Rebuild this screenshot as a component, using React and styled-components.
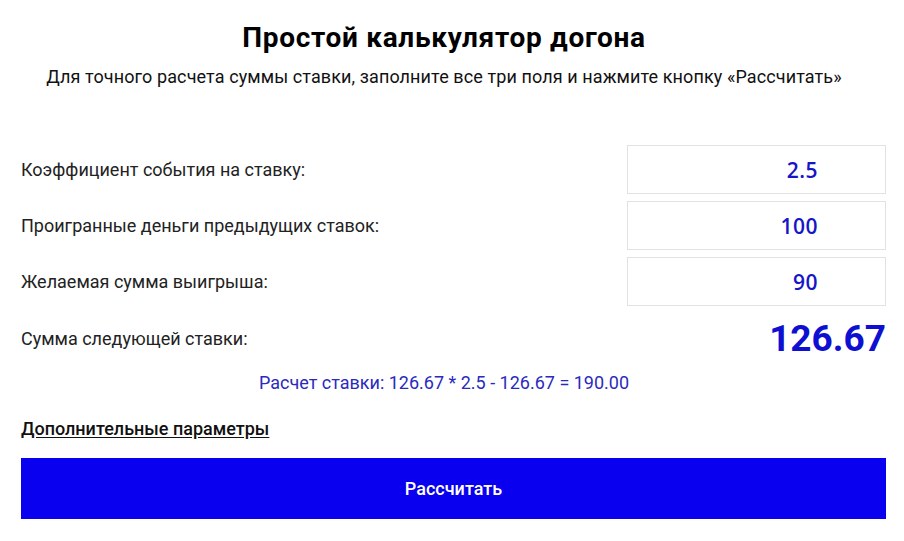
import styled, { createGlobalStyle } from "styled-components";

const Global = createGlobalStyle`
  body {
    margin: 0;
    background: #fff;
    font-family: Roboto, "Liberation Sans", sans-serif;
    color: #111;
  }
`;

const Page = styled.div`
  width: 865px;
  padding: 20px 18px 0 21px;
`;

const Header = styled.header`
  padding-right: 19px;
  text-align: center;
`;

const Title = styled.h1`
  margin: 0;
  font-size: 28px;
  font-weight: 700;
  line-height: 36px;
  letter-spacing: 0.7px;
  color: #000;
`;

const Subtitle = styled.p`
  margin: 8px 0 0;
  font-size: 18px;
  line-height: 26px;
  letter-spacing: 0.1px;
  color: #111;
`;

const Form = styled.div`
  margin-top: 55px;
  display: flex;
  flex-direction: column;
  gap: 7px;
`;

const Row = styled.div`
  display: flex;
  align-items: center;
  justify-content: space-between;
  height: ${(p) => (p.$tall ? "50px" : "49px")};
`;

const Label = styled.span`
  font-size: 18px;
  color: #222;
`;

const Field = styled.div`
  box-sizing: border-box;
  width: 259px;
  height: 49px;
  border: 1.5px solid #e2e2e2;
  display: flex;
  align-items: center;
  justify-content: flex-end;
  padding-right: 67px;
  font-family: "Open Sans", "DejaVu Sans", sans-serif;
  font-weight: 600;
  font-size: 21px;
  letter-spacing: 0.5px;
  color: #1616c8;
`;

const Result = styled.span`
  font-size: 37px;
  font-weight: 700;
  color: #0f0fd2;
`;

const Formula = styled.div`
  padding-right: 19px;
  text-align: center;
  font-size: 18px;
  line-height: 24px;
  color: #2a2abe;
  margin-top: 8px;
`;

const More = styled.a`
  display: block;
  width: max-content;
  margin-top: 22px;
  font-size: 18px;
  line-height: 24px;
  font-weight: 500;
  color: #111;
  text-decoration: underline;
  text-underline-offset: 2px;
`;

const Button = styled.button`
  display: block;
  width: 865px;
  height: 61px;
  margin-top: 17px;
  border: none;
  background: #0800ee;
  color: #fff;
  font-family: Roboto, "Liberation Sans", sans-serif;
  font-size: 18px;
  font-weight: 500;
  cursor: pointer;
`;

const fields = [
  { label: "Коэффициент события на ставку:", value: "2.5" },
  { label: "Проигранные деньги предыдущих ставок:", value: "100" },
  { label: "Желаемая сумма выигрыша:", value: "90" },
];

export default function App() {
  return (
    <>
      <Global />
      <Page>
        <Header>
          <Title>Простой калькулятор догона</Title>
          <Subtitle>
            Для точного расчета суммы ставки, заполните все три поля и нажмите
            кнопку «Рассчитать»
          </Subtitle>
        </Header>
        <Form>
          {fields.map((f) => (
            <Row key={f.label}>
              <Label>{f.label}</Label>
              <Field>{f.value}</Field>
            </Row>
          ))}
          <Row $tall>
            <Label>Сумма следующей ставки:</Label>
            <Result>126.67</Result>
          </Row>
        </Form>
        <Formula>Расчет ставки: 126.67 * 2.5 - 126.67 = 190.00</Formula>
        <More>Дополнительные параметры</More>
        <Button>Рассчитать</Button>
      </Page>
    </>
  );
}
